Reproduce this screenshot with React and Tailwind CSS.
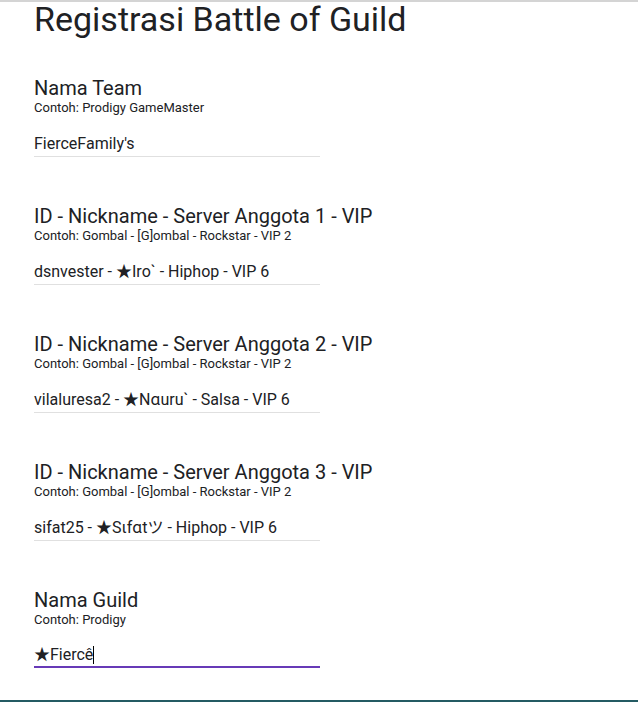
const fields = [
  { label: "Nama Team", hint: "Contoh: Prodigy GameMaster", value: "FierceFamily's" },
  { label: "ID - Nickname - Server Anggota 1 - VIP", hint: "Contoh: Gombal - [G]ombal - Rockstar - VIP 2", value: "dsnvester - ★Iro` - Hiphop - VIP 6" },
  { label: "ID - Nickname - Server Anggota 2 - VIP", hint: "Contoh: Gombal - [G]ombal - Rockstar - VIP 2", value: "vilaluresa2 - ★Nɑuru` - Salsa - VIP 6" },
  { label: "ID - Nickname - Server Anggota 3 - VIP", hint: "Contoh: Gombal - [G]ombal - Rockstar - VIP 2", value: "sifat25 - ★Sιfɑtツ - Hiphop - VIP 6" },
  { label: "Nama Guild", hint: "Contoh: Prodigy", value: "★Fiercê", focused: true },
];

const Field = ({ label, hint, value, focused }) => (
  <div>
    <div className="text-[20px] leading-[24px] text-[#202124]">{label}</div>
    <div className="text-[13px] leading-[16px] text-[#202124]">{hint}</div>
    {focused ? (
      <div className="mt-[16px] w-[286px] h-[24px] border-b-2 border-[#673ab7] flex items-center text-[16px] leading-[24px] text-[#202124]">
        <span>{value}</span>
        <span className="w-px h-[18px] bg-black" />
      </div>
    ) : (
      <div className="mt-[16px] w-[286px] h-[25px] border-b border-[#e0e0e0] text-[16px] leading-[24px] text-[#202124]">
        {value}
      </div>
    )}
  </div>
);

const App = () => {
  return (
    <div
      className="min-h-[702px] bg-white border-t-2 border-[#d4d4d4] flex flex-col"
      style={{ fontFamily: "Roboto, 'Noto Sans CJK JP', 'DejaVu Sans', sans-serif" }}
    >
      <div className="px-[34px] flex-1">
        <h1 className="text-[34px] leading-[34px] text-[#202124]">Registrasi Battle of Guild</h1>
        <div className="mt-[40px] flex flex-col gap-[47px]">
          {fields.map((f) => (
            <Field key={f.label} {...f} />
          ))}
        </div>
      </div>
      <div className="h-[2px] bg-[#245b63]" />
    </div>
  );
};

export default App;
